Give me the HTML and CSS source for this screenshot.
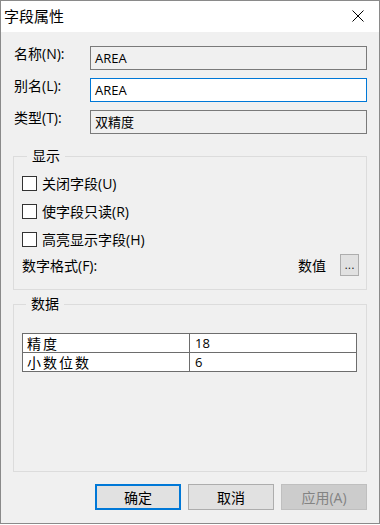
FILE: index.html
```html
<!doctype html>
<html lang="zh">
<head>
  <meta charset="utf-8" />
  <title>字段属性</title>
  <link rel="stylesheet" href="styles.css">
</head>
<body>
<div class="window">

  <div class="titlebar">
    <span class="title">字段属性</span>
    <svg class="close" width="12" height="12" viewBox="0 0 12 12">
      <path d="M0.5 0.5L11.5 11.5M11.5 0.5L0.5 11.5" stroke="#000" stroke-width="1" fill="none"/>
    </svg>
  </div>

  <div class="content">
    <div class="form">
      <label>名称(N):</label>
      <div class="field readonly">AREA</div>
      <label>别名(L):</label>
      <div class="field active">AREA</div>
      <label>类型(T):</label>
      <div class="field readonly">双精度</div>
    </div>

    <div class="group">
      <div class="legend">显示</div>
      <div class="rows">
        <div class="check"><span class="box"></span>关闭字段(U)</div>
        <div class="check"><span class="box"></span>使字段只读(R)</div>
        <div class="check"><span class="box"></span>高亮显示字段(H)</div>
        <div class="format">
          <span class="fmt-label">数字格式(F):</span>
          <span class="fmt-value">数值</span>
          <button class="dots">...</button>
        </div>
      </div>
    </div>

    <div class="group data">
      <div class="legend">数据</div>
      <table class="grid">
        <tr><td class="key">精度</td><td class="val">18</td></tr>
        <tr><td class="key">小数位数</td><td class="val">6</td></tr>
      </table>
    </div>

    <div class="buttons">
      <button class="btn default">确定</button>
      <button class="btn">取消</button>
      <button class="btn disabled">应用(A)</button>
    </div>
  </div>

</div>
</body>
</html>
```

FILE: styles.css
```css
*{box-sizing:border-box;margin:0;padding:0}

body{
  background:#fff;
  font-family:"Open Sans","Noto Sans CJK SC",sans-serif;
  font-size:14px;
  color:#000;
  width:380px;
  height:525px;
  overflow:hidden;
}

.window{
  width:380px;
  height:524px;
  border:1px solid #8a8a8a;
  background:#f0f0f0;
  display:flex;
  flex-direction:column;
}

.titlebar{
  height:31px;
  background:#fff;
  display:flex;
  align-items:center;
  justify-content:space-between;
  padding:0 15px 0 3px;
}
.title{font-size:15px;line-height:18px;margin-top:-1px}
.close{display:block;margin-top:-1px}

.content{
  padding:14px 12px 0 12px;
  display:flex;
  flex-direction:column;
}

.form{
  display:grid;
  grid-template-columns:77px 277px;
  row-gap:8px;
  align-items:start;
}
.form label{line-height:16px;padding-left:1px;white-space:nowrap}

.field{
  height:24px;
  border:1px solid #7a7a7a;
  padding:0 4px;
  font-size:13px;
  line-height:22px;
}
.field.readonly{background:#f0f0f0}
.field.active{background:#fff;border-color:#0078d7}

.group{
  border:1px solid #dcdcdc;
  margin-top:22px;
  padding:0 7px 12px 9px;
}
.legend{
  width:fit-content;
  margin:-9px 0 0 4px;
  padding:0 5px;
  background:#f0f0f0;
  line-height:16px;
}
.rows{margin-top:5px}

.check{
  height:28px;
  display:flex;
  align-items:center;
  gap:5px;
}
.box{
  flex:none;
  width:15px;height:15px;
  margin-left:-1px;
  border:1px solid #333;
  background:#fff;
}

.format{
  height:24px;
  display:flex;
  align-items:center;
}
.fmt-label{margin-left:-1px;flex:1}
.fmt-value{margin-right:14px}
.dots{
  width:19px;height:22px;
  border:1px solid #adadad;
  background:#e1e1e1;
  font:12px "Liberation Sans",sans-serif;
  color:#222;
  line-height:18px;
}

.data{
  margin-top:14px;
  padding:0 9px 99px 8px;
}
.grid{
  margin-top:21px;
  width:100%;
  border-collapse:collapse;
  background:#fff;
}
.grid td{
  border:1px solid #6d6d6d;
  height:19px;
  line-height:17px;
  padding:0 0 0 4px;
}
.grid .key{width:167px;letter-spacing:2px;font-size:14px}
.grid .val{font-size:13px;padding-left:5px}

.buttons{
  display:flex;
  justify-content:flex-end;
  gap:7px;
  margin-top:12px;
}
.btn{
  width:86px;height:26px;
  border:1px solid #adadad;
  background:#e1e1e1;
  font:14px "Open Sans","Noto Sans CJK SC",sans-serif;
  color:#000;
}
.btn.default{border:2px solid #0078d7}
.btn.disabled{background:#cccccc;border-color:#bfbfbf;color:#838383}
```
